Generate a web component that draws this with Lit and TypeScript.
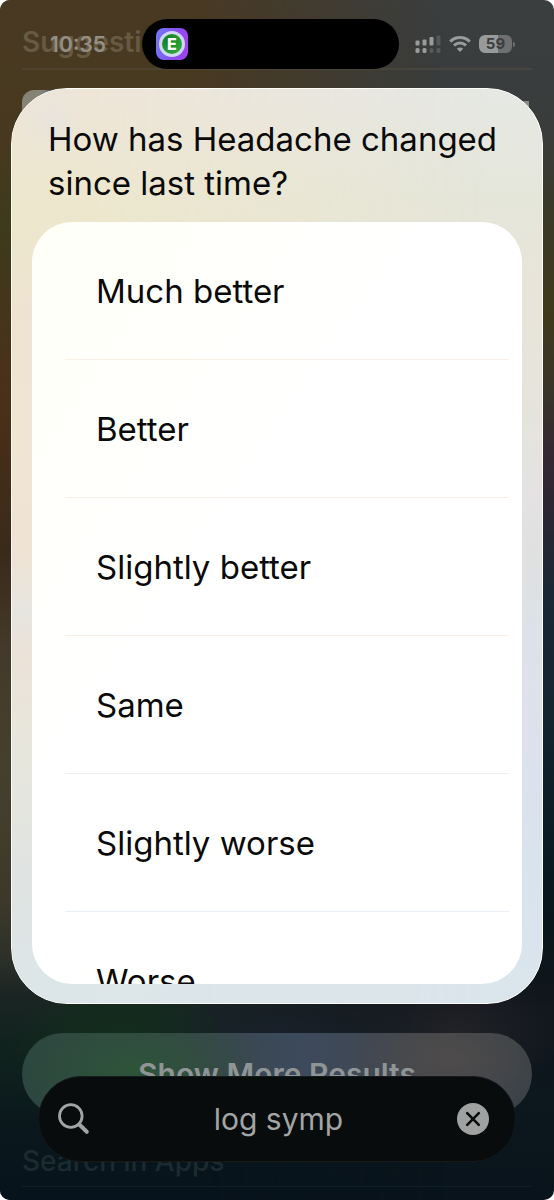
import { LitElement, html, css } from "lit";
import { customElement, property, state } from "lit/decorators.js";

@customElement("status-bar")
class StatusBar extends LitElement {
  @property() time = "10:35";
  @property({ type: Number }) battery = 59;

  static styles = css`
    :host {
      display: grid;
      grid-template-columns: 1fr auto 1fr;
      align-items: center;
      height: 50px;
      padding: 0 13px 0 0;
    }
    .time {
      padding-left: 50px;
      font-size: 21px;
      font-weight: 600;
      color: #948f86;
    }
    .island {
      display: flex;
      align-items: center;
      box-sizing: border-box;
      width: 257px;
      height: 50px;
      padding-left: 14px;
      border-radius: 25px;
      background: #000;
    }
    .app {
      display: grid;
      place-items: center;
      width: 32px;
      height: 32px;
      border-radius: 8px;
      background: linear-gradient(100deg, #6f7cf2, #8a4cf0 60%, #a63ff0);
    }
    .badge {
      display: grid;
      place-items: center;
      box-sizing: border-box;
      width: 26px;
      height: 26px;
      border: 3px solid #cfd6f6;
      border-radius: 50%;
      background: radial-gradient(circle at 30% 30%, #157a1e, #35b545);
      color: #fff;
      font-size: 16px;
      font-weight: 800;
      line-height: 20px;
    }
    .signals {
      display: flex;
      align-items: center;
      gap: 8px;
      padding-left: 16px;
    }
    svg {
      display: block;
    }
    .battery {
      display: flex;
      align-items: center;
      gap: 1px;
    }
    .cell {
      width: 33px;
      height: 18px;
      border-radius: 6px;
      background: linear-gradient(90deg, #999b9b 59%, #6d6f70 59%);
      color: #3c3e3f;
      font-size: 15px;
      font-weight: 700;
      line-height: 18px;
      text-align: center;
    }
    .tip {
      width: 2px;
      height: 5px;
      border-radius: 0 2px 2px 0;
      background: #6d6f70;
    }
  `;

  render() {
    return html`
      <span class="time">${this.time}</span>
      <div class="island">
        <div class="app"><span class="badge">E</span></div>
      </div>
      <div class="signals">
        <svg width="26" height="18" viewBox="0 0 26 18" fill="#999b9b" aria-hidden="true">
          <rect x="0.5" y="5.5" width="4" height="5" rx="1" />
          <rect x="7.5" y="4.5" width="4" height="6" rx="1" />
          <rect x="14.5" y="2" width="4" height="8.5" rx="1" />
          <rect x="21.5" y="0.5" width="4" height="10" rx="1" fill="#555758" />
          <rect x="0.5" y="13" width="4" height="5" rx="1.5" />
          <rect x="7.5" y="13" width="4" height="5" rx="1.5" />
          <rect x="14.5" y="13" width="4" height="5" rx="1.5" fill="#555758" />
          <rect x="21.5" y="13" width="4" height="5" rx="1.5" fill="#555758" />
        </svg>
        <svg width="22" height="16" viewBox="0 0 22 16" fill="none" stroke="#999b9b" stroke-width="3" aria-hidden="true">
          <path d="M1.2 5.6a14 14 0 0 1 19.6 0" />
          <path d="M5 9.5a8.5 8.5 0 0 1 12 0" />
          <path d="M11 16l-3.2-3.3a4.6 4.6 0 0 1 6.4 0z" fill="#999b9b" stroke="none" />
        </svg>
        <div class="battery">
          <span class="cell">${this.battery}</span>
          <span class="tip"></span>
        </div>
      </div>
    `;
  }
}

@customElement("choice-dialog")
class ChoiceDialog extends LitElement {
  @property() question = "";
  @property({ type: Array }) choices: string[] = [];

  static styles = css`
    :host {
      position: relative;
      isolation: isolate;
      display: flex;
      flex-direction: column;
      box-sizing: border-box;
      min-height: 0;
      padding: 28px 20px 19px;
      border: 1px solid #fdfdf8;
      border-radius: 56px;
      overflow: hidden;
      background: linear-gradient(180deg, #e6e8e4, #e5e6da 12%, #e8e4d9 21%, #e5e4dc 36%, #e4e2e3 45%, #dfe0e0 52%, #dde2e9 60%, #dce1ee 74%, #d8e3ed 85%, #dbe5ec);
      color: #0a0a0a;
    }
    /* Warm light from the left side, fading out towards the right */
    :host::before {
      content: "";
      position: absolute;
      inset: 0;
      z-index: -1;
      background:
        radial-gradient(circle at 40px 30px, #e8e4dc, transparent 36px),
        linear-gradient(180deg, #eee5d8, #ece7cc 14%, #eee3d0 24%, #f0e4d3 40%, #eee3d4 51%, #e6e5df 57%, #ebe2d8 62%, #e7e6dc 72%, #dfe3e2 87%, #dce6e8);
      -webkit-mask-image: linear-gradient(90deg, #000 15%, transparent 90%);
      mask-image: linear-gradient(90deg, #000 15%, transparent 90%);
    }
    h1 {
      margin: 0 12px 17px 16px;
      font-size: 33px;
      font-weight: 400;
      line-height: 44px;
    }
    ul {
      flex: 1;
      min-height: 0;
      overflow: hidden;
      margin: 0;
      padding: 0;
      border-radius: 40px;
      list-style: none;
      background: linear-gradient(125deg, #fffff8, #fff 40%);
    }
    li {
      margin: 0 13px 0 33px;
      border-bottom: 1px solid #f8efe6;
    }
    li:nth-child(n + 4) {
      border-color: #e9eff5;
    }
    button {
      display: block;
      width: 100%;
      height: 137px;
      padding: 0 31px;
      border: 0;
      background: none;
      color: inherit;
      font: inherit;
      font-size: 33px;
      text-align: left;
    }
  `;

  render() {
    return html`
      <h1>${this.question}</h1>
      <ul>
        ${this.choices.map((c) => html`<li><button type="button">${c}</button></li>`)}
      </ul>
    `;
  }
}

@customElement("search-field")
class SearchField extends LitElement {
  @state() value = "log symp";

  static styles = css`
    :host {
      display: flex;
      align-items: center;
      box-sizing: border-box;
      height: 86px;
      padding: 0 26px 0 19px;
      border: 1px solid #14191a;
      border-radius: 43px;
      background: #090c0c;
    }
    label {
      display: flex;
    }
    input {
      flex: 1;
      min-width: 0;
      padding: 0 0 0 10px;
      border: 0;
      outline: 0;
      background: none;
      color: #a3a5a5;
      font: inherit;
      font-size: 30px;
      text-align: center;
    }
    button {
      display: flex;
      padding: 0;
      border: 0;
      background: none;
    }
  `;

  render() {
    return html`
      <label for="query" aria-label="Search">
        <svg width="32" height="32" viewBox="0 0 32 32" fill="none" stroke="#a3a5a5" stroke-linecap="round" aria-hidden="true">
          <circle cx="12.8" cy="13" r="11.3" stroke-width="2.8" />
          <path d="M21.6 21.8l7.2 7" stroke-width="4" />
        </svg>
      </label>
      <input id="query" type="text" .value=${this.value} />
      <button type="button" aria-label="Clear" @click=${() => (this.value = "")}>
        <svg width="32" height="32" viewBox="0 0 32 32" aria-hidden="true">
          <circle cx="16" cy="16" r="16" fill="#a0a2a2" />
          <path d="M10.2 10.2l11.6 11.6M21.8 10.2l-11.6 11.6" stroke="#0a0d0d" stroke-width="2.6" stroke-linecap="round" />
        </svg>
      </button>
    `;
  }
}

@customElement("app-root")
class AppRoot extends LitElement {
  static styles = css`
    :host {
      display: grid;
      grid-template: 100vh / minmax(0, 1fr);
      overflow: hidden;
      background: #fff;
      font-family: Inter, "Noto Sans", sans-serif;
    }
    .results,
    .front {
      grid-area: 1 / 1;
      display: flex;
      flex-direction: column;
      box-sizing: border-box;
    }
    .results {
      position: relative;
      isolation: isolate;
      overflow: hidden;
      padding: 22px 22px 0;
      border-radius: 10px;
      background: linear-gradient(180deg, #3a3e3f, #393c3b 11%, #3a3a2a 17%, #40391c 26%, #38342a 33%, #352833 38%, #262733 45%, #1a2735 50%, #14242f 60%, #0b1b23 71%, #08161b 77%, #12161d 84%, #0c171e 92%, #08131b);
    }
    /* Wallpaper: warm left side fading right, coloured glows behind the lower rows */
    .results::before,
    .results::after {
      content: "";
      position: absolute;
      inset: 0;
      z-index: -1;
    }
    .results::before {
      background: linear-gradient(180deg, #493923, #47391f 12%, #3f3a1c 19%, #4a3018 33%, #3a2a1b 46%, #44392a 54%, #45402e 64%, #3d392a 75%, #2c302a 80%, #1a2523 83%, #0f221d 88%, #0a171c 94%, #07131c);
      -webkit-mask-image: linear-gradient(90deg, #000 35%, transparent 80%);
      mask-image: linear-gradient(90deg, #000 35%, transparent 80%);
    }
    .results::after {
      background:
        radial-gradient(ellipse 110px 90px at 22% 88%, #12301c, transparent),
        radial-gradient(ellipse 160px 60px at 50% 87%, #1a202c, transparent),
        radial-gradient(ellipse 110px 60px at 82% 86%, #212226, transparent);
    }
    h2 {
      margin: 0;
      font-size: 28px;
      font-weight: 600;
      line-height: 40px;
    }
    .suggestions {
      padding-bottom: 6px;
      border-bottom: 2px solid #5650437a;
      color: #665a43;
    }
    .hit {
      display: flex;
      justify-content: space-between;
      flex: 1;
      padding-top: 20px;
    }
    .thumb {
      width: 56px;
      height: 56px;
      border-radius: 12px;
      background: linear-gradient(135deg, #858276 20%, #45616a 26%, #6f7472);
    }
    .more-mark {
      width: 24px;
      height: 24px;
      margin: 11px 3px 0 0;
      background: #8a8c8b;
    }
    .show-more {
      height: 82px;
      border: 0;
      border-radius: 41px;
      background:
        radial-gradient(ellipse 130px 70px at 22% 45%, #2d5438, transparent),
        radial-gradient(ellipse 100px 60px at 84% 30%, #4e4b4b, transparent),
        linear-gradient(90deg, #2c4540, #38454b 35%, #3d4a5c 55%, #42464b 80%, #3a4147);
      color: #8f9596;
      font: inherit;
      font-size: 30px;
      font-weight: 600;
    }
    .apps {
      margin-top: 26px;
      padding-bottom: 5px;
      border-bottom: 1px solid #101e26;
      color: #1b2b30;
      font-weight: 500;
    }
    .foot {
      height: 13px;
    }
    .front {
      position: relative;
      padding: 19px 11px 38px;
      min-height: 0;
    }
    status-bar {
      margin: 0 -11px;
      flex: none;
    }
    choice-dialog {
      flex: 1;
      margin: 19px 0 72px;
    }
    search-field {
      flex: none;
      margin: 0 27px;
    }
  `;

  render() {
    return html`
      <section class="results">
        <h2 class="suggestions">Suggestions</h2>
        <div class="hit">
          <span class="thumb"></span>
          <span class="more-mark"></span>
        </div>
        <button class="show-more" type="button">Show More Results</button>
        <h2 class="apps">Search in Apps</h2>
        <div class="foot"></div>
      </section>
      <main class="front">
        <status-bar></status-bar>
        <choice-dialog
          role="dialog"
          question="How has Headache changed since last time?"
          .choices=${["Much better", "Better", "Slightly better", "Same", "Slightly worse", "Worse"]}
        ></choice-dialog>
        <search-field></search-field>
      </main>
    `;
  }
}
